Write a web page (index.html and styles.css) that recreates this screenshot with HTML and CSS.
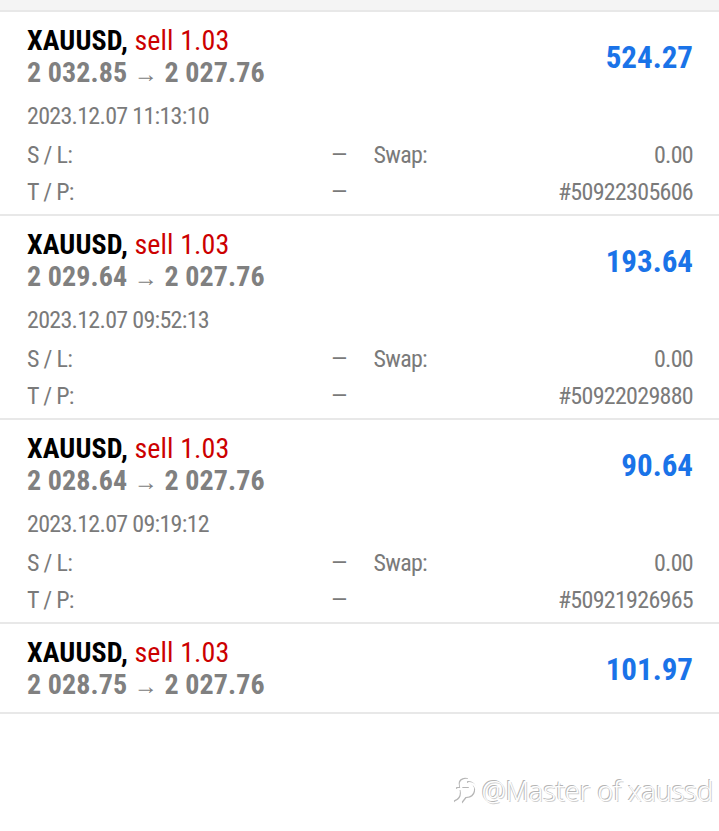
FILE: index.html
```html
<html>
	<head>
		<link rel="stylesheet" href="styles.css">
	</head>
	<body>
		<div class="top-strip"></div>
		<div class="trade-list">
			<div class="trade">
				<div class="trade-head">
					<div class="trade-main">
						<div class="trade-title">XAUUSD, <span class="trade-side">sell 1.03</span></div>
						<div class="trade-prices">2 032.85 <span class="arrow">&rarr;</span> 2 027.76</div>
					</div>
					<div class="trade-profit">524.27</div>
				</div>
				<div class="trade-date">2023.12.07 11:13:10</div>
				<div class="trade-rows">
					<div class="cell"><span>S / L:</span><span>&mdash;</span></div>
					<div class="cell"><span>Swap:</span><span>0.00</span></div>
					<div class="cell"><span>T / P:</span><span>&mdash;</span></div>
					<div class="cell"><span></span><span>#50922305606</span></div>
				</div>
			</div>
			<div class="trade">
				<div class="trade-head">
					<div class="trade-main">
						<div class="trade-title">XAUUSD, <span class="trade-side">sell 1.03</span></div>
						<div class="trade-prices">2 029.64 <span class="arrow">&rarr;</span> 2 027.76</div>
					</div>
					<div class="trade-profit">193.64</div>
				</div>
				<div class="trade-date">2023.12.07 09:52:13</div>
				<div class="trade-rows">
					<div class="cell"><span>S / L:</span><span>&mdash;</span></div>
					<div class="cell"><span>Swap:</span><span>0.00</span></div>
					<div class="cell"><span>T / P:</span><span>&mdash;</span></div>
					<div class="cell"><span></span><span>#50922029880</span></div>
				</div>
			</div>
			<div class="trade">
				<div class="trade-head">
					<div class="trade-main">
						<div class="trade-title">XAUUSD, <span class="trade-side">sell 1.03</span></div>
						<div class="trade-prices">2 028.64 <span class="arrow">&rarr;</span> 2 027.76</div>
					</div>
					<div class="trade-profit">90.64</div>
				</div>
				<div class="trade-date">2023.12.07 09:19:12</div>
				<div class="trade-rows">
					<div class="cell"><span>S / L:</span><span>&mdash;</span></div>
					<div class="cell"><span>Swap:</span><span>0.00</span></div>
					<div class="cell"><span>T / P:</span><span>&mdash;</span></div>
					<div class="cell"><span></span><span>#50921926965</span></div>
				</div>
			</div>
			<div class="trade">
				<div class="trade-head">
					<div class="trade-main">
						<div class="trade-title">XAUUSD, <span class="trade-side">sell 1.03</span></div>
						<div class="trade-prices">2 028.75 <span class="arrow">&rarr;</span> 2 027.76</div>
					</div>
					<div class="trade-profit">101.97</div>
				</div>
			</div>
		</div>
		<div class="watermark">
			<svg class="watermark-logo" width="26" height="30" viewBox="0 0 26 30">
				<path d="M14 4 C9 3 6 6 7 10 L8 17 C8 22 5 25 2 26 M4 13 L15 13 M15 7 C20 7 23 11 22 16 C21 21 17 23 13 23 L10 27" fill="none" stroke="#fff" stroke-width="2.2" stroke-linecap="round"/>
			</svg>
			<span>@Master of xaussd</span>
		</div>
	</body>
</html>
```

FILE: styles.css
```css
html,body{
	margin:0;
	padding:0;
	background:#fff;
}
body{
	font-family:"Roboto Condensed",Roboto,sans-serif;
	font-stretch:condensed;
	position:relative;
	height:831px;
}
.top-strip{
	height:10px;
	background:#f4f4f4;
}
.trade-list{
	border-top:2px solid #e8e8e8;
}
.trade{
	padding:13px 26px 2px 27px;
	border-bottom:2px solid #e8e8e8;
}
.trade-head{
	display:flex;
	justify-content:space-between;
	align-items:center;
	padding-bottom:9px;
}
.trade-title,.trade-prices{
	font-size:28px;
	line-height:32px;
	font-weight:700;
	letter-spacing:0.1px;
	white-space:nowrap;
}
.trade-title{
	color:#000;
}
.trade-title .trade-side{
	color:#cc0000;
	font-weight:400;
}
.trade-prices{
	color:#808080;
}
.trade-prices .arrow{
	font-size:24px;
	font-weight:400;
	line-height:0;
}
.trade-profit{
	font-size:31px;
	font-weight:700;
	color:#1a73e8;
}
.trade-date{
	font-size:24px;
	line-height:36px;
	color:#7a7a7a;
	letter-spacing:-0.7px;
}
.trade-rows{
	display:grid;
	grid-template-columns:1fr 1fr;
	column-gap:27px;
	margin-top:3px;
	padding-bottom:1px;
}
.trade-rows .cell{
	display:flex;
	justify-content:space-between;
	font-size:24px;
	line-height:37px;
	color:#7a7a7a;
	letter-spacing:-0.7px;
}
.watermark{
	position:absolute;
	right:6px;
	top:772px;
	display:flex;
	align-items:center;
	gap:2px;
	font-family:"Open Sans",sans-serif;
	font-stretch:normal;
	font-weight:300;
	font-size:27px;
	color:#fff;
	text-shadow:-1px -1px 0 #b5b5b5,1px 1px 0 #d0d0d0;
}
.watermark-logo{
	filter:drop-shadow(-1px -1px 0 #b5b5b5);
}
```
